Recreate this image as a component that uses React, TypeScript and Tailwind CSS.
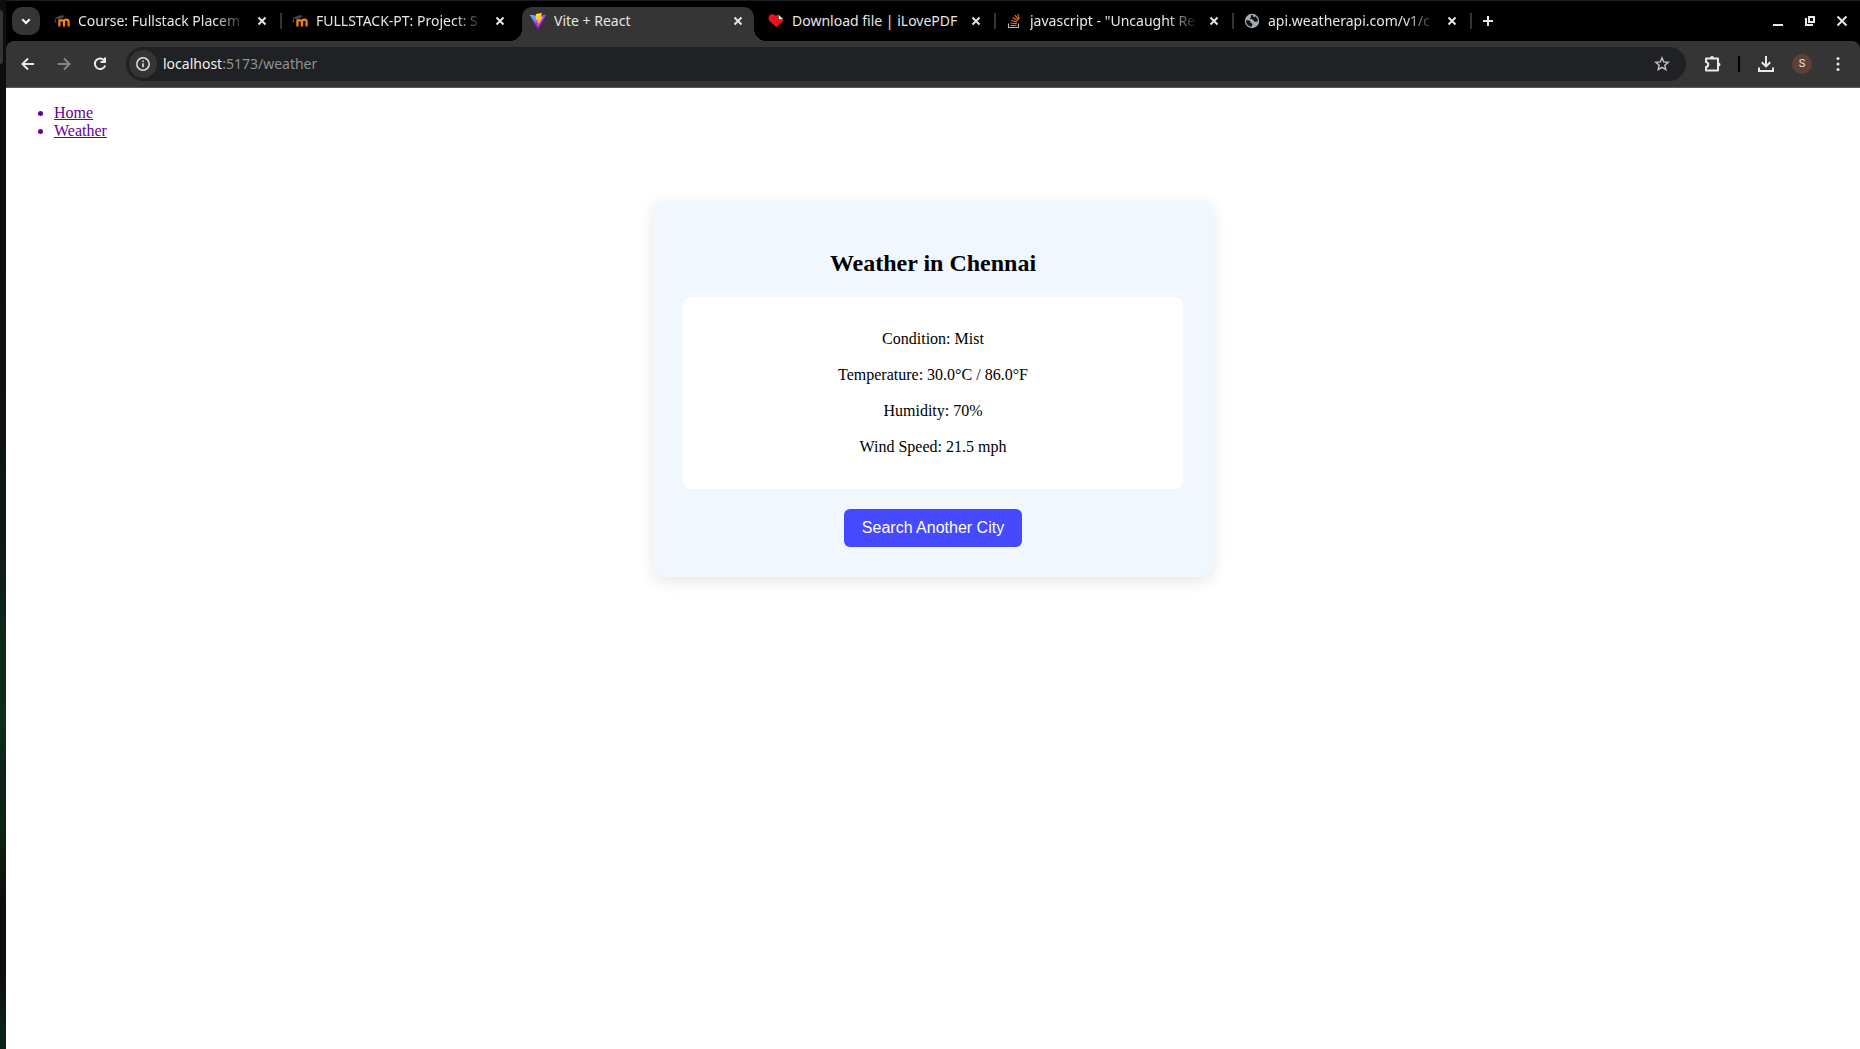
import type { ReactNode } from "react";

function MoodleIcon() {
  return (
    <svg viewBox="0 0 16 16" className="size-4 shrink-0" aria-hidden="true">
      <path
        d="M5.400 13.500V6.500M10 13.500V8.600c0-2.600 4.600-2.600 4.600 0v4.900M5.400 7.400h2.400q2 .2 2.200 2"
        fill="none"
        stroke="#f98012"
        strokeWidth="2.200"
      />
      <path d="M1.200 4.800 7 2.300l4.200.5-3.600 2.800-3.800.7z" fill="#4b4542" />
      <path d="M1.500 5v3.500" stroke="#5a3014" strokeWidth="1" />
      <circle cx="1.300" cy="8.600" r=".9" fill="#8a4410" />
    </svg>
  );
}

function ViteIcon() {
  return (
    <svg viewBox="0 0 256 257" className="size-4 shrink-0" aria-hidden="true">
      <defs>
        <linearGradient id="viteBody" x1="-.8%" x2="57.6%" y1="7.7%" y2="78.4%">
          <stop offset="0%" stopColor="#41D1FF" />
          <stop offset="100%" stopColor="#BD00FF" />
        </linearGradient>
        <linearGradient id="viteBolt" x1="43.4%" x2="50.3%" y1="2.2%" y2="89%">
          <stop offset="0%" stopColor="#FFEA83" />
          <stop offset="8.3%" stopColor="#FFDD35" />
          <stop offset="100%" stopColor="#FFA800" />
        </linearGradient>
      </defs>
      <path
        fill="url(#viteBody)"
        d="M255.153 37.938 134.897 252.976c-2.483 4.44-8.862 4.466-11.382.048L.875 37.958c-2.746-4.814 1.371-10.646 6.827-9.67l120.385 21.517a6.537 6.537 0 0 0 2.322-.004l117.867-21.483c5.438-.991 9.574 4.796 6.877 9.62Z"
      />
      <path
        fill="url(#viteBolt)"
        d="M185.432.063 96.44 17.501a3.268 3.268 0 0 0-2.634 3.014l-5.474 92.456a3.268 3.268 0 0 0 3.997 3.378l24.777-5.718c2.318-.535 4.413 1.507 3.936 3.838l-7.361 36.047c-.495 2.426 1.782 4.5 4.151 3.78l15.304-4.649c2.372-.72 4.652 1.36 4.15 3.788l-11.698 56.621c-.732 3.542 3.979 5.473 5.943 2.437l1.313-2.028 72.516-144.72c1.215-2.423-.88-5.186-3.54-4.672l-25.505 4.922c-2.396.462-4.435-1.77-3.759-4.114l16.646-57.705c.677-2.35-1.37-4.583-3.769-4.113Z"
      />
    </svg>
  );
}

function HeartIcon() {
  return (
    <svg viewBox="0 0 16 16" className="size-4 shrink-0" aria-hidden="true">
      <path
        d="M8.400 14.300 2 8.500C-.3 6.300.2 2.800 2.600 1.600 4.800.6 6.800 1.300 8 3c.7-.8 1.400-1.200 2.200-1.400v5h5.400c-.2 1-.8 1.700-1.400 2.300z"
        fill="#f4101a"
      />
      <path d="M10.600 1.800 15.200 6.200h-4.600z" fill="#fff" />
    </svg>
  );
}

function StackIcon() {
  return (
    <svg viewBox="0 0 16 16" className="size-4 shrink-0" aria-hidden="true">
      <path d="M2.500 10.500v4h10v-4" fill="none" stroke="#bcbbbb" strokeWidth="1.100" />
      <path
        d="M4.300 12.500h6.400M4.500 10l6.300.8M5.200 7.300l6 1.900M6.800 4.500l5.100 3.400M9 2.200l3.700 4.700M11.800.8l1.300 5.200"
        fill="none"
        stroke="#f2720c"
        strokeWidth="1.100"
      />
    </svg>
  );
}

function GlobeIcon() {
  return (
    <svg viewBox="0 0 16 16" className="size-4 shrink-0" aria-hidden="true">
      <circle cx="8" cy="8" r="7.200" fill="#a3a9b0" />
      <path
        d="M2 7.600c1.600-.4 3.400-.4 4.200.6.7.9.200 1.700 1.200 2 .9.200 1.100.7.900 1.500l-.4 1.900c-3.200.2-6-2.500-5.900-6zM7.300 2.200c-.7 1 .2 1.400-.4 2.300-.5.700-1.100.8-.7 1.600.500.800 2.300.2 3 .8.800.7.6 1.700 1.700 1.900.9.200 1.700-.4 3-.6.1-2-1.100-4-2.700-5-.2.900-1.300 1.100-1.800.6-.4-.5 0-1-.4-1.500-.6-.3-1.200-.2-1.700-.1z"
        fill="#111"
      />
    </svg>
  );
}

function Stroke({ children, size = "size-4" }: { children: ReactNode; size?: string }) {
  return (
    <svg
      viewBox="0 0 16 16"
      className={size}
      fill="none"
      stroke="currentColor"
      strokeWidth="2"
      aria-hidden="true"
    >
      {children}
    </svg>
  );
}

function IconButton({
  label,
  className = "text-[#e8e8e8]",
  children,
}: {
  label: string;
  className?: string;
  children: ReactNode;
}) {
  return (
    <button
      type="button"
      aria-label={label}
      className={`flex size-7 shrink-0 items-center justify-center ${className}`}
    >
      {children}
    </button>
  );
}

type TabInfo = { title: string; icon: ReactNode; active?: boolean; separator?: boolean; fades?: boolean };

const tabs: TabInfo[] = [
  { title: "Course: Fullstack Placem", icon: <MoodleIcon />, separator: true, fades: true },
  { title: "FULLSTACK-PT: Project: S", icon: <MoodleIcon />, fades: true },
  { title: "Vite + React", icon: <ViteIcon />, active: true },
  { title: "Download file | iLovePDF", icon: <HeartIcon />, separator: true },
  { title: 'javascript - "Uncaught Re', icon: <StackIcon />, separator: true, fades: true },
  { title: "api.weatherapi.com/v1/c", icon: <GlobeIcon />, separator: true, fades: true },
];

function Tab({ title, icon, active, separator, fades }: TabInfo) {
  return (
    <div className="relative flex h-full w-[238px] min-w-0 items-start">
      {active && (
        <div className="absolute inset-y-0 right-1 left-0.5 rounded-t-[10px] bg-[#353535]">
          <span className="absolute bottom-0 -left-3 size-3 bg-[radial-gradient(circle_at_0_0,transparent_12px,#353535_12px)]" />
          <span className="absolute -right-3 bottom-0 size-3 bg-[radial-gradient(circle_at_100%_0,transparent_12px,#353535_12px)]" />
        </div>
      )}
      <div className="relative flex h-7 min-w-0 flex-1 items-center gap-2 px-2.5">
        {icon}
        <button
          type="button"
          className={`min-w-0 flex-1 overflow-hidden text-left text-sm leading-5 whitespace-nowrap text-[#e6e6e6] ${
            fades ? "[mask-image:linear-gradient(to_right,#000_82%,transparent)]" : ""
          }`}
        >
          {title}
        </button>
        <button
          type="button"
          aria-label={`Close ${title}`}
          className="flex size-4 shrink-0 items-center justify-center text-[#e6e6e6]"
        >
          <Stroke>
            <path d="m4.500 4.500 7 7m0-7-7 7" />
          </Stroke>
        </button>
      </div>
      <span className={`mt-1.5 h-4 w-0.5 shrink-0 ${separator ? "bg-[#353535]" : ""}`} />
    </div>
  );
}

function TabStrip() {
  return (
    <div className="flex h-[41px] items-end border-t border-[#1c1c1c] bg-black pr-1 pl-1.5">
      <div className="flex h-[34px] w-8 shrink-0 items-start">
        <button
          type="button"
          aria-label="Search tabs"
          className="flex size-7 items-center justify-center rounded-[10px] bg-[#353535] text-white"
        >
          <Stroke>
            <path d="m4.300 6.300 3.700 3.700 3.700-3.700" />
          </Stroke>
        </button>
      </div>
      <div className="flex h-[34px] min-w-0">
        {tabs.map((tab) => (
          <Tab key={tab.title} {...tab} />
        ))}
      </div>
      <div className="flex h-[34px] flex-1 items-start justify-between pl-0.5">
        <IconButton label="New tab">
          <Stroke>
            <path d="M8 3v10M3 8h10" />
          </Stroke>
        </IconButton>
        <div className="flex gap-1">
          <IconButton label="Minimize">
            <Stroke>
              <path d="M3 12h10" />
            </Stroke>
          </IconButton>
          <IconButton label="Restore">
            <Stroke>
              <path d="M7 4h5v5H7zM4 5v7h7" />
            </Stroke>
          </IconButton>
          <IconButton label="Close window">
            <Stroke>
              <path d="m3.500 3.500 9 9m0-9-9 9" />
            </Stroke>
          </IconButton>
        </div>
      </div>
    </div>
  );
}

function Toolbar() {
  return (
    <div className="bg-black">
      <div className="flex h-[47px] items-center gap-2 rounded-t-lg border-b border-[#5a5a5a] bg-[#353535] px-2">
        <IconButton label="Back">
          <Stroke>
            <path d="M14 8H3M8 2.500 2.500 8 8 13.500" />
          </Stroke>
        </IconButton>
        <IconButton label="Forward" className="text-[#868686]">
          <Stroke>
            <path d="M2 8h11M8 2.500 13.500 8 8 13.500" />
          </Stroke>
        </IconButton>
        <IconButton label="Reload">
          <Stroke>
            <path d="M12.700 5A5.300 5.300 0 1 0 13.200 9.500M13 1.500V6H8.500" />
          </Stroke>
        </IconButton>
        <div className="ml-1 flex h-[34px] min-w-0 flex-1 items-center rounded-full bg-[#202124] px-[3px]">
          <IconButton label="Site information" className="rounded-full bg-[#353535] text-[#e0e0e0]">
            <svg viewBox="0 0 16 16" className="size-4" fill="none" stroke="currentColor" aria-hidden="true">
              <circle cx="8" cy="8" r="6.200" strokeWidth="1.500" />
              <path d="M8 7.200v4M8 4.600v1.500" strokeWidth="1.600" />
            </svg>
          </IconButton>
          <button
            type="button"
            className="min-w-0 flex-1 overflow-hidden pl-1.5 text-left text-sm leading-5 whitespace-nowrap text-[#8f9194]"
          >
            <span className="text-[#eeeeee]">localhost</span>:5173/weather
          </button>
          <IconButton label="Bookmark this tab" className="mr-[7px] text-[#c4c4c4]">
            <svg viewBox="0 0 16 16" className="size-4" fill="none" stroke="currentColor" strokeWidth="1.400" aria-hidden="true">
              <path d="m8 1.800 1.700 4.100 4.500.4-3.400 2.900 1 4.400L8 11.300l-3.800 2.300 1-4.400-3.400-2.900 4.500-.4z" />
            </svg>
          </IconButton>
        </div>
        <div className="flex items-center gap-3 pl-1">
          <IconButton label="Extensions">
            <svg viewBox="0 0 18 18" className="size-[18px]" fill="none" stroke="currentColor" strokeWidth="2" aria-hidden="true">
              <path d="M3 3.500h12v12H3v-3.400c3-.6 3-4.600 0-5.200z" strokeLinejoin="round" />
              <path d="M7 3a2 2 0 0 1 4 0zM15.500 7.500a2 2 0 0 1 0 4z" fill="currentColor" stroke="none" />
            </svg>
          </IconButton>
          <span className="h-4 w-0.5 bg-black" />
          <IconButton label="Downloads">
            <svg viewBox="0 0 18 18" className="size-[18px]" fill="none" stroke="currentColor" strokeWidth="2" aria-hidden="true">
              <path d="M9 1v10M4.800 7.200 9 11.400l4.200-4.200M2 12.500V16h14v-3.500" />
            </svg>
          </IconButton>
        </div>
        <IconButton label="Profile">
          <span className="flex size-5 items-center justify-center rounded-full bg-[#5d4037] font-['Roboto',sans-serif] text-[11px] leading-5">
            S
          </span>
        </IconButton>
        <IconButton label="Menu">
          <svg viewBox="0 0 16 16" className="size-4" fill="currentColor" aria-hidden="true">
            <circle cx="8" cy="2.500" r="1.500" />
            <circle cx="8" cy="8" r="1.500" />
            <circle cx="8" cy="13.500" r="1.500" />
          </svg>
        </IconButton>
      </div>
    </div>
  );
}

const readings = [
  "Condition: Mist",
  "Temperature: 30.0°C / 86.0°F",
  "Humidity: 70%",
  "Wind Speed: 21.5 mph",
];

function WeatherPage() {
  return (
    <div className="flex-1 bg-white px-2 py-4 font-['Liberation_Serif',serif] text-base leading-[18px] text-black">
      <nav>
        <ul className="list-disc pl-10 text-[#660099] marker:text-[#660099]">
          <li>
            <a href="#home" className="underline">Home</a>
          </li>
          <li>
            <a href="#weather" className="underline">Weather</a>
          </li>
        </ul>
      </nav>
      <main className="mx-auto mt-[60px] max-w-[560px] rounded-xl bg-[#f0f7ff] p-[30px] text-center shadow-[0_4px_16px_rgba(0,0,0,0.1)]">
        <h2 className="my-5 text-2xl leading-[27px] font-bold">Weather in Chennai</h2>
        <section className="flex flex-col gap-[18px] rounded-lg bg-white px-5 py-[33px]">
          {readings.map((reading) => (
            <p key={reading}>{reading}</p>
          ))}
        </section>
        <button
          type="button"
          className="mt-5 rounded-md bg-[#4549ff] px-[18px] py-2.5 align-top font-['Liberation_Sans',sans-serif] text-base leading-[18px] text-white"
        >
          Search Another City
        </button>
      </main>
    </div>
  );
}

export default function App() {
  return (
    <div className="flex min-h-screen bg-black">
      <div className="w-1.5 shrink-0 bg-[linear-gradient(to_bottom,#0e0e0e_0%,#0e0e0e_25%,#101616_50%,#0d2a1a_62%,#0b3018_69%,#10201a_74%,#0e2410_79%,#0e0e0e_86%,#0e0e0e_93%,#0a201c_98%)] pt-2.5">
        <div className="h-[54px] w-[3px] rounded-r-sm bg-[#333333]" />
      </div>
      <div className="flex min-w-0 flex-1 flex-col font-['Noto_Sans',sans-serif]">
        <TabStrip />
        <Toolbar />
        <WeatherPage />
      </div>
    </div>
  );
}
